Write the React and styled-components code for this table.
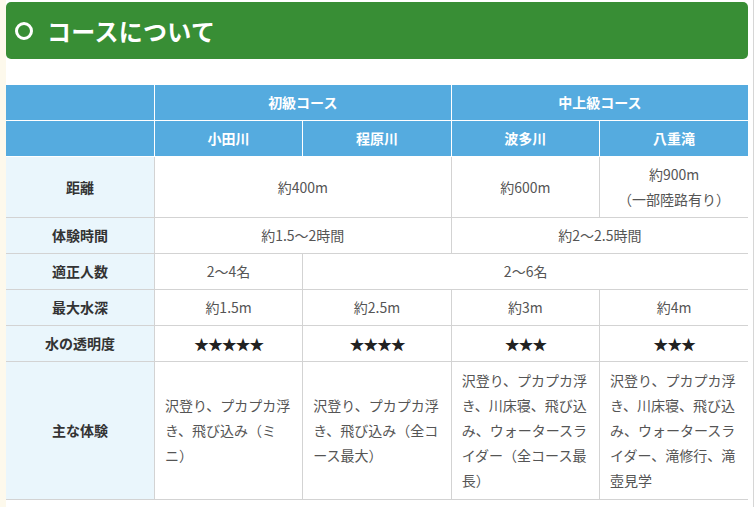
import React from 'react';
import styled, { createGlobalStyle } from 'styled-components';

const Global = createGlobalStyle`
  html, body {
    margin: 0;
    padding: 0;
    background: #fdf9ec;
  }
  body {
    font-family: "Noto Sans CJK JP", "Noto Sans", sans-serif;
  }
`;

const Page = styled.div`
  margin-left: 6px;
  width: 742px;
  padding: 2px 5px 20px 0;
  background: #fff;
  border-right: 1px solid #d6d6d6;
`;

const Heading = styled.h2`
  display: flex;
  align-items: center;
  gap: 14px;
  margin: 0;
  height: 57px;
  padding: 0 0 0 9px;
  background: #388e35;
  border-radius: 5px;
  color: #fff;
  font-size: 24px;
  font-weight: 700;
  letter-spacing: 0.3px;
`;

const Ring = styled.span`
  width: 12px;
  height: 12px;
  border: 3.5px solid #fff;
  border-radius: 50%;
  flex: none;
`;

const Table = styled.table`
  margin-top: 26px;
  width: 742px;
  border-collapse: collapse;
  table-layout: fixed;
  font-size: 14px;
  line-height: 25px;
`;

const Head = styled.th`
  background: #55abdf;
  color: #fff;
  font-weight: 700;
  font-size: 14px;
  text-align: center;
  padding: 5px 10px;
  border: 1px solid #fff;
  border-top: none;
  &:last-child { border-right: none; }
  &:first-child { border-left: none; }
`;

const Label = styled.th`
  background: #eaf6fc;
  color: #333;
  font-weight: 700;
  text-align: center;
  padding: 5px 10px;
  border: 1px solid #d3d3d3;
  border-left: none;
`;

const Cell = styled.td`
  color: ${p => (p.$star ? '#222' : '#555')};
  text-align: ${p => (p.$left ? 'left' : 'center')};
  padding: ${p => (p.$left ? '6px 10px' : '5px 10px')};
  border: 1px solid #d3d3d3;
  border-right: ${p => (p.$end ? 'none' : '1px solid #d3d3d3')};
  vertical-align: middle;
  ${p => p.$star && 'font-size: 15px; letter-spacing: -1.2px;'}
`;

const rows = [
  ['適正人数', [['2〜4名', 1], ['2〜6名', 3]]],
  ['最大水深', [['約1.5m', 1], ['約2.5m', 1], ['約3m', 1], ['約4m', 1]]],
];

const stars = ['★★★★★', '★★★★', '★★★', '★★★'];

const experiences = [
  '沢登り、プカプカ浮き、飛び込み（ミニ）',
  '沢登り、プカプカ浮き、飛び込み（全コース最大）',
  '沢登り、プカプカ浮き、川床寝、飛び込み、ウォータースライダー（全コース最長）',
  '沢登り、プカプカ浮き、川床寝、飛び込み、ウォータースライダー、滝修行、滝壺見学',
];

export default function App() {
  return (
    <>
      <Global />
      <Page>
        <Heading>
          <Ring />
          コースについて
        </Heading>
        <Table>
          <thead>
            <tr>
              <Head />
              <Head colSpan={2}>初級コース</Head>
              <Head colSpan={2}>中上級コース</Head>
            </tr>
            <tr>
              <Head />
              <Head>小田川</Head>
              <Head>程原川</Head>
              <Head>波多川</Head>
              <Head>八重滝</Head>
            </tr>
          </thead>
          <tbody>
            <tr>
              <Label>距離</Label>
              <Cell colSpan={2}>約400m</Cell>
              <Cell>約600m</Cell>
              <Cell $end>約900m<br />（一部陸路有り）</Cell>
            </tr>
            <tr>
              <Label>体験時間</Label>
              <Cell colSpan={2}>約1.5〜2時間</Cell>
              <Cell colSpan={2} $end>約2〜2.5時間</Cell>
            </tr>
            {rows.map(([label, cells]) => (
              <tr key={label}>
                <Label>{label}</Label>
                {cells.map(([text, span], i) => (
                  <Cell key={i} colSpan={span} $end={i === cells.length - 1}>{text}</Cell>
                ))}
              </tr>
            ))}
            <tr>
              <Label>水の透明度</Label>
              {stars.map((s, i) => (
                <Cell key={i} $star $end={i === 3}>{s}</Cell>
              ))}
            </tr>
            <tr>
              <Label>主な体験</Label>
              {experiences.map((t, i) => (
                <Cell key={i} $left $end={i === 3}>{t}</Cell>
              ))}
            </tr>
          </tbody>
        </Table>
      </Page>
    </>
  );
}
